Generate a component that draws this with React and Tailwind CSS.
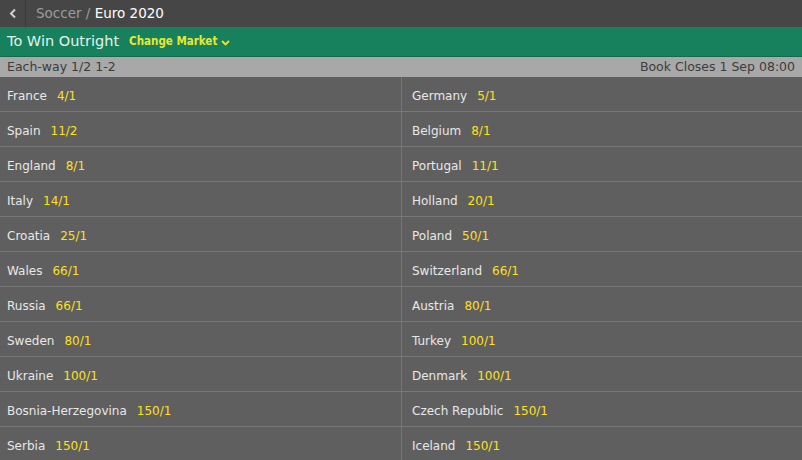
import React from 'react'

const left = [
    ['France', '4/1'],
    ['Spain', '11/2'],
    ['England', '8/1'],
    ['Italy', '14/1'],
    ['Croatia', '25/1'],
    ['Wales', '66/1'],
    ['Russia', '66/1'],
    ['Sweden', '80/1'],
    ['Ukraine', '100/1'],
    ['Bosnia-Herzegovina', '150/1'],
    ['Serbia', '150/1'],
]

const right = [
    ['Germany', '5/1'],
    ['Belgium', '8/1'],
    ['Portugal', '11/1'],
    ['Holland', '20/1'],
    ['Poland', '50/1'],
    ['Switzerland', '66/1'],
    ['Austria', '80/1'],
    ['Turkey', '100/1'],
    ['Denmark', '100/1'],
    ['Czech Republic', '150/1'],
    ['Iceland', '150/1'],
]

const App = () => {
    return (
        <div className="w-[802px] h-[460px] overflow-hidden bg-[#5f5f5f] font-['DejaVu_Sans',sans-serif]">
            {/* Breadcrumb */}
            <div className="flex items-center h-[27px] bg-[#464646]">
                <div className="w-[26px] h-full flex items-center justify-center border-r border-[#3a3a3a]">
                    <svg width="8" height="11" viewBox="0 0 8 11">
                        <path d="M6 1.5 L2 5.5 L6 9.5" fill="none" stroke="#cfcfcf" strokeWidth="2" />
                    </svg>
                </div>
                <div className="pl-[10px] text-[13.5px] text-[#9c9c9c]">
                    Soccer / <span className="text-white">Euro 2020</span>
                </div>
            </div>

            {/* Market header */}
            <div className="flex items-center h-[30px] bg-[#17805c] pl-[7px] border-b border-[#126b4c]">
                <span className="text-[14.5px] text-[#e4f3ec]">To Win Outright</span>
                <span className="ml-[10px] mt-[1px] text-[11.5px] font-bold text-[#e8e830] font-['DejaVu_Sans_Condensed',sans-serif]">Change Market</span>
                <svg className="ml-[4px] mt-[3px]" width="9" height="6" viewBox="0 0 9 6">
                    <path d="M1 1 L4.5 4.5 L8 1" fill="none" stroke="#e8e830" strokeWidth="1.8" />
                </svg>
            </div>

            {/* Each-way bar */}
            <div className="flex items-center justify-between h-[20px] bg-[#a8a8a8] px-[7px] text-[12.5px] text-[#3c3c3c]">
                <span>Each-way 1/2 1-2</span>
                <span>Book Closes 1 Sep 08:00</span>
            </div>

            {/* Selections */}
            <div className="grid grid-cols-[402px_400px]">
                {left.map((row, i) => (
                    <React.Fragment key={i}>
                        <div className="h-[35px] flex items-center pl-[7px] pt-[3px] border-b border-r border-[#777777] text-[12px]">
                            <span className="text-[#e8e8e8]">{row[0]}</span>
                            <span className="ml-[10px] text-[#ffe01a]">{row[1]}</span>
                        </div>
                        <div className="h-[35px] flex items-center pl-[10px] pt-[3px] border-b border-[#777777] text-[12px]">
                            <span className="text-[#e8e8e8]">{right[i][0]}</span>
                            <span className="ml-[10px] text-[#ffe01a]">{right[i][1]}</span>
                        </div>
                    </React.Fragment>
                ))}
            </div>
        </div>
    )
}

export default App
